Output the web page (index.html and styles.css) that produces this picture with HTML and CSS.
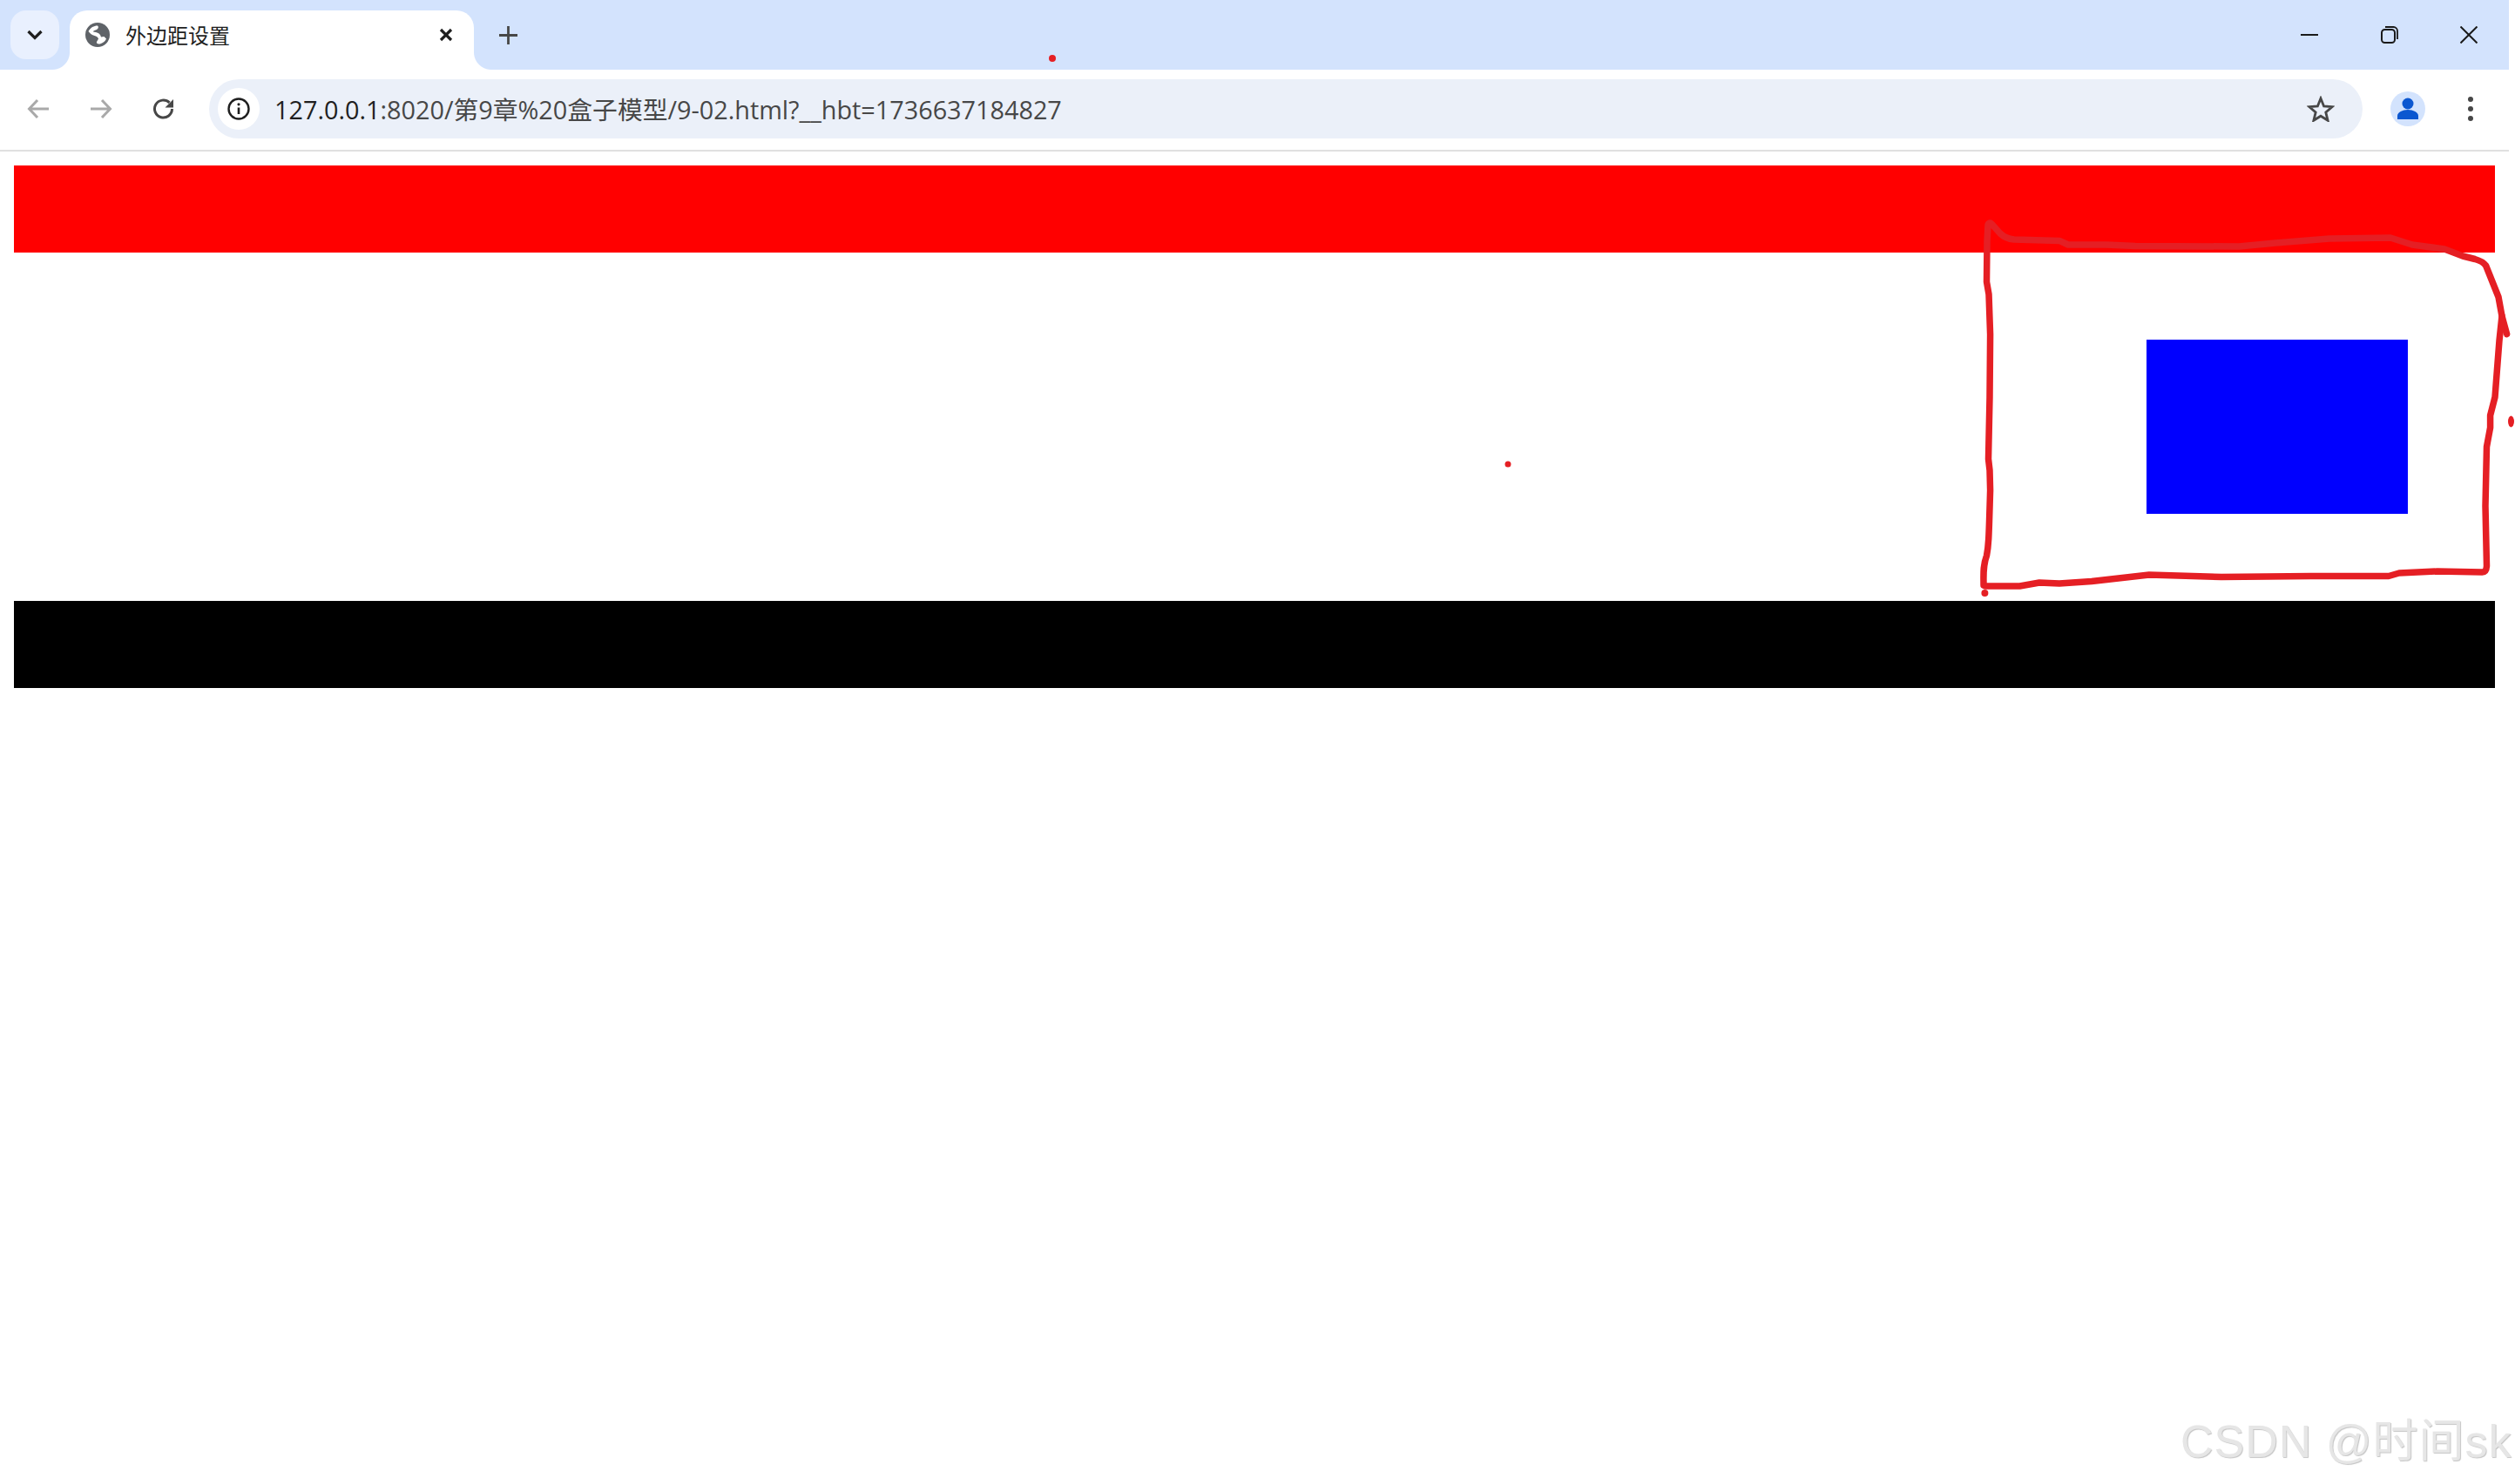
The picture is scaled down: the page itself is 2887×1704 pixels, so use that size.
FILE: index.html
```html
<!DOCTYPE html>
<html lang="zh">
<head>
<meta charset="utf-8">
<title>外边距设置</title>
<link rel="stylesheet" href="styles.css">
</head>
<body>
<div class="window">
  <div class="strip">
    <button class="tab-search"><svg viewBox="0 0 20 20" class="i20"><path d="M2.500 6l7.500 7.500L17.500 6" fill="none" stroke="#1f1f1f" stroke-width="3.200"/></svg></button>
    <div class="tab">
      <svg viewBox="0 0 28 28" class="favicon"><circle cx="14" cy="14" r="14" fill="#5f6368"/><path d="M15 3.500C11 3 6 5 3.500 10c2 2.500 4 4.500 7 5 2 .5 4 1.500 4.500 3.500l-2 3.500c-.5 1 .5 2.500 2.500 2.500 3 0 7-2.500 8.500-6l-2.500-2.500-3.500.5c-.5-3-3-5-6-5.500l-3-.5c0-1.500 2.500-2 4-2.500 2-1 2.500-3.500 1-4.500z" fill="#fff"/></svg>
      <span class="tab-title">外边距设置</span>
      <svg viewBox="0 0 18 18" class="tab-x"><path d="M3 3l12 12M15 3L3 15" fill="none" stroke="#1f1f1f" stroke-width="3.200"/></svg>
    </div>
    <svg viewBox="0 0 21 21" class="new-tab"><path d="M10.500 0v21M0 10.500h21" fill="none" stroke="#474747" stroke-width="2.800"/></svg>
    <div class="win-controls">
      <svg viewBox="0 0 20 20" class="win-i"><path d="M0 10h20" stroke="#1a1a1a" stroke-width="2" fill="none"/></svg>
      <svg viewBox="0 0 20 20" class="win-i"><rect x="1" y="4" width="15" height="15" rx="3.500" fill="none" stroke="#1a1a1a" stroke-width="2"/><path d="M5 1h9.500A4.500 4.500 0 0 1 19 5.500V15" fill="none" stroke="#1a1a1a" stroke-width="1.800"/></svg>
      <svg viewBox="0 0 20 20" class="win-i"><path d="M0.500 0.500l19 19M19.500 0.500l-19 19" stroke="#1a1a1a" stroke-width="2" fill="none"/></svg>
    </div>
  </div>
  <div class="toolbar">
    <div class="nav">
      <svg viewBox="0 0 26 24" class="nav-i"><path d="M25 12H3M12 2L2.500 12 12 22" fill="none" stroke="#a9a9a9" stroke-width="3"/></svg>
      <svg viewBox="0 0 26 24" class="nav-i"><path d="M1 12h22M14 2l9.500 10L14 22" fill="none" stroke="#a9a9a9" stroke-width="3"/></svg>
      <svg viewBox="0 0 26 26" class="nav-i"><path d="M22.500 13a10 10 0 1 1-3-7.100" fill="none" stroke="#474747" stroke-width="3"/><path d="M24 2v9.500h-9.500z" fill="#474747"/></svg>
    </div>
    <div class="omnibox">
      <div class="info-chip"><svg viewBox="0 0 26 26" class="info-i"><circle cx="13" cy="13" r="11.500" fill="none" stroke="#1f1f1f" stroke-width="2.400"/><path d="M13 11.500v7.500" stroke="#1f1f1f" stroke-width="2.600"/><circle cx="13" cy="7.800" r="1.600" fill="#1f1f1f"/></svg></div>
      <span class="url"><span class="host">127.0.0.1</span>:8020/第9章%20盒子模型/9-02.html?__hbt=1736637184827</span>
      <svg viewBox="0 0 32 30" class="star"><path d="M16 3l3.600 9 9.400.7-7.200 6.200 2.300 9.400L16 23.200l-8.100 5.100 2.300-9.400L3 12.700l9.400-.7z" fill="none" stroke="#474747" stroke-width="2.800" stroke-linejoin="miter"/></svg>
    </div>
    <div class="profile"><svg viewBox="0 0 40 40" class="profile-i"><circle cx="20" cy="14" r="6.500" fill="#0b57d0"/><path d="M8 32v-4c0-4 6-7 12-7s12 3 12 7v4z" fill="#0b57d0"/></svg></div>
    <div class="menu"><i></i><i></i><i></i></div>
  </div>
  <main class="page">
    <div class="bar bar-red"></div>
    <div class="box"></div>
    <div class="bar bar-black"></div>
  </main>
</div>
<svg class="ink" viewBox="0 0 2887 1704">
  <path class="ink-line" d="M2277 672C2277 660 2276 650 2280.500 638C2283 625 2283 616 2284.600 563L2284 540L2282.500 527L2284 456L2284.600 384L2283 338L2280.500 323.600L2281 277L2282 258Q2284 254 2287 258L2296 268Q2302 274 2312 275L2364 276.400L2374 281H2418L2451 282.500L2570 283L2612 279L2674 274L2744 273L2769 281L2806 286L2827 294L2841 297.500Q2850 300 2853.600 305L2868 341L2872 363L2877.600 383.600"/>
  <path class="ink-line" d="M2872 363L2869 391L2864 456L2858.600 477V491L2854.500 513L2853 581L2854.500 650Q2854 657 2849.500 657L2798 656L2754 658L2742 661.500H2653L2550 662.500L2467 660L2401 667.500L2364 670L2341 669L2318.500 673H2279"/>
  <circle class="ink-dot" cx="2278.400" cy="681" r="4"/>
  <ellipse class="ink-dot" cx="2882.500" cy="484" rx="3.500" ry="6.500"/>
  <circle class="ink-dot" cx="1208" cy="67" r="4"/>
  <circle class="ink-dot" cx="1731" cy="533" r="3.500"/>
</svg>
<div class="watermark">CSDN @时间sk</div>
</body>
</html>
```
FILE: styles.css
```css
* { box-sizing: border-box; }
html, body { margin: 0; padding: 0; background: #fff; overflow: hidden; }
body { position: relative; width: 2887px; height: 1704px; font-family: "Noto Sans", "Noto Sans CJK SC", sans-serif; }
.window { width: 2880px; }

.strip { display: flex; align-items: flex-start; height: 80px; background: #d3e3fd; padding-top: 12px; padding-left: 12px; }
.tab-search { display: flex; align-items: center; justify-content: center; width: 56px; height: 56px; padding: 0; border: 0; border-radius: 18px; background: #e9f0fe; }
.i20 { width: 20px; height: 20px; }
.tab { position: relative; display: flex; align-items: center; width: 464px; height: 68px; margin-left: 12px; padding: 0 0 12px 18px; background: #fff; border-radius: 20px 20px 0 0; }
.tab::before, .tab::after { content: ""; position: absolute; bottom: 0; width: 20px; height: 20px; }
.tab::before { left: -20px; background: radial-gradient(circle at 0 0, transparent 19.500px, #fff 20.500px); }
.tab::after { right: -20px; background: radial-gradient(circle at 100% 0, transparent 19.500px, #fff 20.500px); }
.favicon { width: 28px; height: 28px; flex: none; }
.tab-title { margin-left: 18px; font: 24px/28px "Noto Sans CJK SC", sans-serif; color: #1f1f1f; flex: 1; }
.tab-x { width: 18px; height: 18px; margin-right: 23px; flex: none; }
.new-tab { width: 21px; height: 21px; margin: 18px 0 0 29px; flex: none; }
.win-controls { display: flex; gap: 71.500px; margin-left: auto; margin-top: 18px; margin-right: 36px; }
.win-i { width: 20px; height: 20px; display: block; }

.toolbar { display: flex; align-items: center; height: 94px; padding: 0 0 2px 0; background: #fff; border-bottom: 2px solid #e0e0e0; border-radius: 18px 18px 0 0; }
.nav { display: flex; align-items: center; gap: 46px; padding-left: 31px; width: 240px; }
.nav-i { width: 26px; height: 26px; flex: none; }
.omnibox { display: flex; align-items: center; width: 2472px; height: 68px; border-radius: 34px; background: #ebf0f9; padding: 0 32px 0 10px; }
.info-chip { display: flex; align-items: center; justify-content: center; width: 48px; height: 48px; border-radius: 50%; background: #fff; flex: none; }
.info-i { width: 26px; height: 26px; }
.url { margin: 1px 0 0 17px; font: 28.800px/36px "Open Sans", "Noto Sans CJK SC", sans-serif; color: #474747; white-space: nowrap; flex: 1; }
.host { color: #1f1f1f; }
.star { width: 32px; height: 30px; flex: none; }
.profile { display: flex; align-items: center; justify-content: center; width: 40px; height: 40px; margin-left: 32px; border-radius: 50%; background: #d3e3fd; flex: none; }
.profile-i { width: 40px; height: 40px; }
.menu { display: flex; flex-direction: column; align-items: center; gap: 5px; margin-left: 49px; }
.menu i { display: block; width: 6px; height: 6px; border-radius: 50%; background: #474747; }

.page { padding: 16px; }
.bar { height: 100px; }
.bar-red { background: #f00; }
.bar-black { background: #000; }
.box { width: 300px; height: 200px; margin: 100px 100px 100px auto; background: #00f; }

.ink { position: absolute; left: 0; top: 0; width: 2887px; height: 1704px; pointer-events: none; }
.ink-line { fill: none; stroke: #e51f24; stroke-width: 7.500; stroke-linejoin: round; stroke-linecap: round; }
.ink-dot { fill: #e51f24; }

.watermark { position: absolute; left: 2503px; top: 1620px; font: 52px/70px "Liberation Sans", "Noto Sans CJK SC", sans-serif; letter-spacing: 1px; color: #e6e6e6; text-shadow: 1px 1px 1px #c4c4c4; white-space: nowrap; }
```
